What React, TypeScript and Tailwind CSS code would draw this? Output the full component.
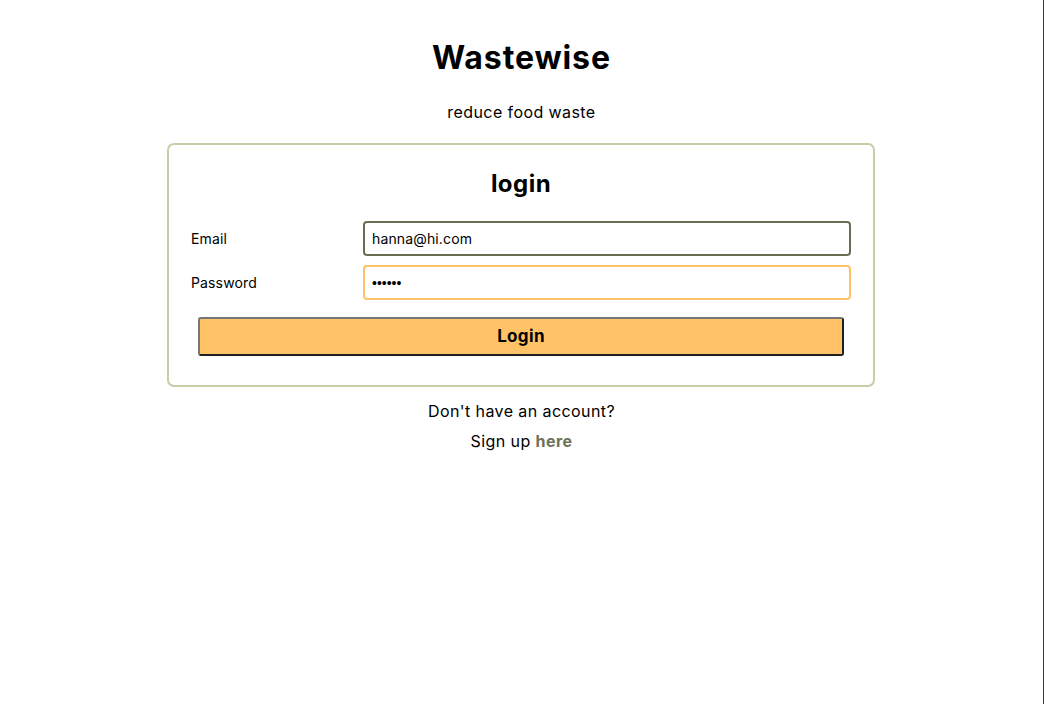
export default function App() {
  return (
    <div className="min-h-screen w-full border-r border-[#3c3c3c] bg-white font-['Inter',sans-serif] text-black">
      <div className="flex flex-col items-center pt-[38px]">
        <h1 className="text-[32px] leading-[40px] font-bold tracking-[0.028em]">Wastewise</h1>
        <p className="mt-[22px] text-base leading-6 tracking-[0.026em]">reduce food waste</p>

        <div className="mt-[19px] -ml-px w-[708px] rounded-[7px] border-2 border-[#c9cda7] px-[22px] pt-[24px] pb-[29px]">
          <h2 className="text-center text-2xl leading-[30px] font-bold tracking-[0.02em]">login</h2>

          <div className="mt-[22px] flex flex-col gap-[9px]">
            <div className="flex items-center">
              <label className="w-[172px] text-sm tracking-[0.01em]">Email</label>
              <input
                type="email"
                defaultValue="hanna@hi.com"
                className="h-[35px] flex-1 rounded-[4px] border-2 border-[#6b6c52] px-[7px] text-sm tracking-[0.01em] outline-none"
              />
            </div>
            <div className="flex items-center">
              <label className="w-[172px] text-sm tracking-[0.01em]">Password</label>
              <input
                type="password"
                defaultValue="secret"
                className="h-[35px] flex-1 rounded-[4px] border-2 border-[#ffc266] px-[7px] font-['Liberation_Sans',sans-serif] text-sm outline-none"
              />
            </div>
          </div>

          <div className="mt-[17px] px-[7px]">
            <button className="h-[39px] w-full rounded-[3px] border-2 border-t-[#767676] border-l-[#767676] border-r-[#1f1f1f] border-b-[#1f1f1f] bg-[#ffc266] text-[17px] font-bold tracking-[0.02em]">
              Login
            </button>
          </div>
        </div>

        <p className="mt-[12px] text-base leading-6 tracking-[0.026em]">Don't have an account?</p>
        <p className="mt-[6px] text-base leading-6 tracking-[0.026em]">
          Sign up <a className="font-bold text-[#6e7257]">here</a>
        </p>
      </div>
    </div>
  );
}
